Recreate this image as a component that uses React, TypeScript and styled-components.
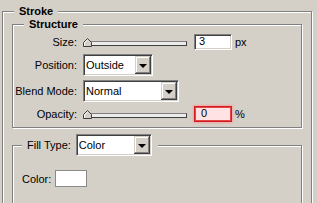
import styled, { createGlobalStyle } from 'styled-components';

const Global = createGlobalStyle`
  html, body {
    margin: 0;
    background: #d4d0c8;
    overflow: hidden;
  }
  body {
    font-family: "Liberation Sans", Arial, sans-serif;
    font-size: 11px;
    color: #000;
  }
`;

const Panel = styled.div`
  width: 317px;
  height: 203px;
  box-sizing: border-box;
  padding: 5px 0 0 2px;
  overflow: hidden;
`;

const Group = styled.fieldset<{ $pad: string; $minH?: number }>`
  margin: 0;
  padding: ${({ $pad }) => $pad};
  min-width: 0;
  min-height: ${({ $minH }) => ($minH ? `${$minH}px` : 'auto')};
  box-sizing: border-box;
  border: 1px solid #808080;
  box-shadow: inset 1px 1px 0 #fff, 1px 1px 0 #fff;
`;

const Outer = styled(Group)`
  width: 310px;
`;

const Inner = styled(Group)<{ $gap?: number }>`
  width: 290px;
  margin-top: ${({ $gap }) => $gap || 0}px;
`;

const Caption = styled.legend<{ $ml: number }>`
  margin-left: ${({ $ml }) => $ml}px;
  padding: 0 5px 0 5px;
  font-weight: bold;
  line-height: 13px;
  background: #d4d0c8;
`;

const ControlCaption = styled.legend<{ $ml: number }>`
  margin-left: ${({ $ml }) => $ml}px;
  padding: 0 6px 0 5px;
  background: #d4d0c8;
  display: flex;
  align-items: center;
  gap: 5px;
`;

const Form = styled.div`
  display: grid;
  grid-template-columns: 64px auto;
  grid-template-rows: 16px 22px 22px 16px;
  column-gap: 6px;
  row-gap: 4px;
  align-items: center;
`;

const Label = styled.div`
  text-align: right;
  white-space: nowrap;
`;

const Controls = styled.div`
  display: flex;
  align-items: center;
`;

const SliderBox = styled.div`
  position: relative;
  width: 104px;
  height: 16px;
  display: flex;
  align-items: center;
`;

const Track = styled.div`
  margin: 3px 0 0 2px;
  flex: 1;
  height: 5px;
  box-sizing: border-box;
  border: 1px solid #404040;
  border-top-color: #808080;
  background: #ececec;
`;

const Thumb = styled.svg`
  position: absolute;
  left: 0;
  top: 4px;
`;

const Field = styled.div<{ $warn?: boolean }>`
  margin-left: 7px;
  width: 38px;
  height: 16px;
  box-sizing: border-box;
  padding-left: ${({ $warn }) => ($warn ? 6 : 4)}px;
  line-height: 12px;
  border: 1px solid;
  border-color: ${({ $warn }) =>
    $warn ? '#d21c1c' : '#808080 #fff #fff #808080'};
  background: ${({ $warn }) => ($warn ? '#ffe2e4' : '#fff')};
  box-shadow: ${({ $warn }) =>
    $warn
      ? 'inset 0 0 0 1px #e6474d, 0 0 2px 1px #f3a6a8'
      : 'inset 1px 1px 0 #404040, inset -1px -1px 0 #d4d0c8'};
`;

const Unit = styled.span`
  margin-left: 3px;
`;

const Select = styled.div<{ $w: number }>`
  width: ${({ $w }) => $w}px;
  height: 22px;
  box-sizing: border-box;
  display: flex;
  border: 1px solid;
  border-color: #808080 #fff #fff #808080;
  box-shadow: inset 1px 1px 0 #404040, inset -1px -1px 0 #d4d0c8;
  background: #fff;
  padding: 1px;
`;

const Value = styled.div`
  flex: 1;
  padding-left: 1px;
  line-height: 18px;
  font-weight: normal;
`;

const Arrow = styled.div`
  width: 16px;
  background: #d4d0c8;
  display: flex;
  align-items: center;
  justify-content: center;
  box-shadow: inset -1px -1px 0 #404040, inset 1px 1px 0 #d4d0c8,
    inset -2px -2px 0 #808080, inset 2px 2px 0 #fff;
  &::after {
    content: '';
    border-left: 4px solid transparent;
    border-right: 4px solid transparent;
    border-top: 4px solid #000;
    margin-top: 1px;
  }
`;

const ColorRow = styled.div`
  display: flex;
  align-items: center;
  gap: 4px;
`;

const Swatch = styled.div`
  width: 32px;
  height: 17px;
  box-sizing: border-box;
  border: 1px solid #8a8a8a;
  background: #fff;
`;

function Slider() {
  return (
    <SliderBox>
      <Track />
      <Thumb width="9" height="9" viewBox="0 0 9 9">
        <path d="M0.5 8.5 V4.5 L4.5 0.5 L8.5 4.5 V8.5 Z" fill="#d4d0c8" stroke="#404040" />
        <path d="M1.5 7.5 V4.9 L4.5 1.9" fill="none" stroke="#fff" />
      </Thumb>
    </SliderBox>
  );
}

function Combo({ w, value }: { w: number; value: string }) {
  return (
    <Select $w={w}>
      <Value>{value}</Value>
      <Arrow />
    </Select>
  );
}

export default function App() {
  return (
    <Panel>
      <Global />
      <Outer $pad="0 9px 0 9px" $minH={260}>
        <Caption $ml={2}>Stroke</Caption>
        <Inner $pad="3px 0 5px 0">
          <Caption $ml={11}>Structure</Caption>
          <Form>
            <Label>Size:</Label>
            <Controls>
              <Slider />
              <Field>3</Field>
              <Unit>px</Unit>
            </Controls>
            <Label>Position:</Label>
            <Controls>
              <Combo w={70} value="Outside" />
            </Controls>
            <Label>Blend Mode:</Label>
            <Controls>
              <Combo w={96} value="Normal" />
            </Controls>
            <Label>Opacity:</Label>
            <Controls>
              <Slider />
              <Field $warn>0</Field>
              <Unit>%</Unit>
            </Controls>
          </Form>
        </Inner>
        <Inner $pad="14px 9px 0 9px" $gap={6} $minH={120}>
          <ControlCaption $ml={0}>
            <span>Fill Type:</span>
            <Combo w={76} value="Color" />
          </ControlCaption>
          <ColorRow>
            <span>Color:</span>
            <Swatch />
          </ColorRow>
        </Inner>
      </Outer>
    </Panel>
  );
}
